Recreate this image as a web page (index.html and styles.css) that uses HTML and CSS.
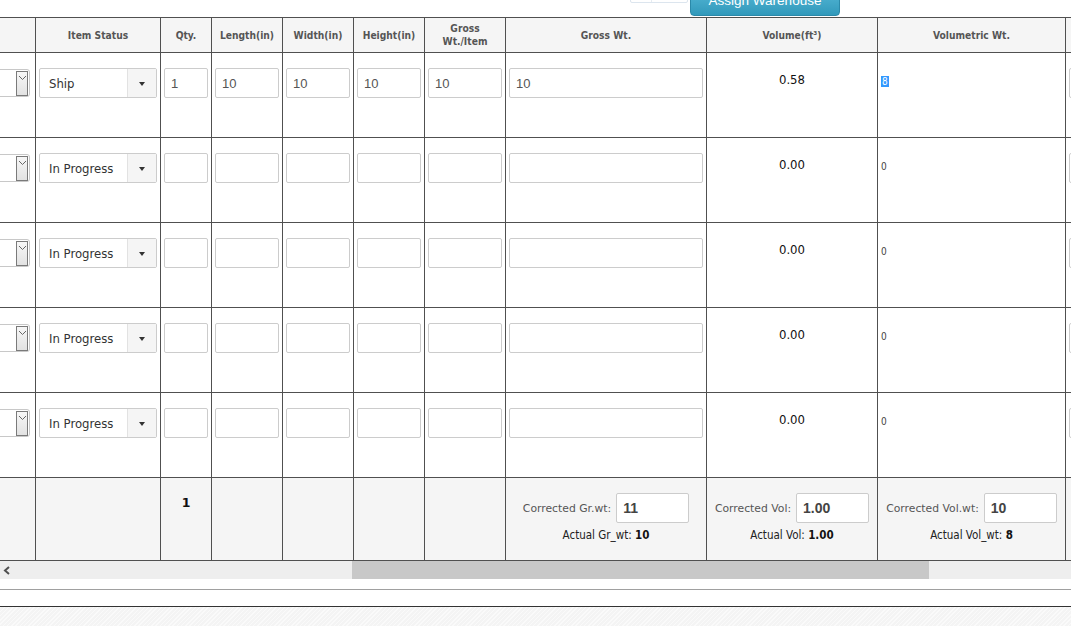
FILE: index.html
```html
<!DOCTYPE html>
<html>
<head>
<meta charset="utf-8">
<title>Items</title>
<link rel="stylesheet" href="styles.css">
</head>
<body>
<div class="page">
  <div class="toolbar">
    <div class="stub"><span class="stub-sep"></span></div>
    <button class="btn-assign">Assign Warehouse</button>
  </div>

  <div class="grid-wrap">
    <div class="row head">
      <div class="cell"></div>
      <div class="cell">Item Status</div>
      <div class="cell">Qty.</div>
      <div class="cell">Length(in)</div>
      <div class="cell">Width(in)</div>
      <div class="cell">Height(in)</div>
      <div class="cell">Gross<br>Wt./Item</div>
      <div class="cell">Gross Wt.</div>
      <div class="cell">Volume(ft³)</div>
      <div class="cell">Volumetric Wt.</div>
      <div class="cell"></div>
    </div>

    <div class="row body">
      <div class="cell cut"><div class="native-sel"><span class="native-btn"><svg width="9" height="6" viewBox="0 0 9 6"><path d="M1 1 L4.5 4.5 L8 1" fill="none" stroke="#666" stroke-width="1"/></svg></span></div></div>
      <div class="cell"><div class="select"><span class="sel-text">Ship</span><span class="sel-arrow"><i class="tri"></i></span></div></div>
      <div class="cell"><div class="inp">1</div></div>
      <div class="cell"><div class="inp">10</div></div>
      <div class="cell"><div class="inp">10</div></div>
      <div class="cell"><div class="inp">10</div></div>
      <div class="cell"><div class="inp">10</div></div>
      <div class="cell"><div class="inp">10</div></div>
      <div class="cell vol">0.58</div>
      <div class="cell volwt"><span class="sel-hl">8</span></div>
      <div class="cell"><div class="inp"></div></div>
    </div>

    <div class="row body">
      <div class="cell cut"><div class="native-sel"><span class="native-btn"><svg width="9" height="6" viewBox="0 0 9 6"><path d="M1 1 L4.5 4.5 L8 1" fill="none" stroke="#666" stroke-width="1"/></svg></span></div></div>
      <div class="cell"><div class="select"><span class="sel-text">In Progress</span><span class="sel-arrow"><i class="tri"></i></span></div></div>
      <div class="cell"><div class="inp"></div></div>
      <div class="cell"><div class="inp"></div></div>
      <div class="cell"><div class="inp"></div></div>
      <div class="cell"><div class="inp"></div></div>
      <div class="cell"><div class="inp"></div></div>
      <div class="cell"><div class="inp"></div></div>
      <div class="cell vol">0.00</div>
      <div class="cell volwt">0</div>
      <div class="cell"><div class="inp"></div></div>
    </div>

    <div class="row body">
      <div class="cell cut"><div class="native-sel"><span class="native-btn"><svg width="9" height="6" viewBox="0 0 9 6"><path d="M1 1 L4.5 4.5 L8 1" fill="none" stroke="#666" stroke-width="1"/></svg></span></div></div>
      <div class="cell"><div class="select"><span class="sel-text">In Progress</span><span class="sel-arrow"><i class="tri"></i></span></div></div>
      <div class="cell"><div class="inp"></div></div>
      <div class="cell"><div class="inp"></div></div>
      <div class="cell"><div class="inp"></div></div>
      <div class="cell"><div class="inp"></div></div>
      <div class="cell"><div class="inp"></div></div>
      <div class="cell"><div class="inp"></div></div>
      <div class="cell vol">0.00</div>
      <div class="cell volwt">0</div>
      <div class="cell"><div class="inp"></div></div>
    </div>

    <div class="row body">
      <div class="cell cut"><div class="native-sel"><span class="native-btn"><svg width="9" height="6" viewBox="0 0 9 6"><path d="M1 1 L4.5 4.5 L8 1" fill="none" stroke="#666" stroke-width="1"/></svg></span></div></div>
      <div class="cell"><div class="select"><span class="sel-text">In Progress</span><span class="sel-arrow"><i class="tri"></i></span></div></div>
      <div class="cell"><div class="inp"></div></div>
      <div class="cell"><div class="inp"></div></div>
      <div class="cell"><div class="inp"></div></div>
      <div class="cell"><div class="inp"></div></div>
      <div class="cell"><div class="inp"></div></div>
      <div class="cell"><div class="inp"></div></div>
      <div class="cell vol">0.00</div>
      <div class="cell volwt">0</div>
      <div class="cell"><div class="inp"></div></div>
    </div>

    <div class="row body">
      <div class="cell cut"><div class="native-sel"><span class="native-btn"><svg width="9" height="6" viewBox="0 0 9 6"><path d="M1 1 L4.5 4.5 L8 1" fill="none" stroke="#666" stroke-width="1"/></svg></span></div></div>
      <div class="cell"><div class="select"><span class="sel-text">In Progress</span><span class="sel-arrow"><i class="tri"></i></span></div></div>
      <div class="cell"><div class="inp"></div></div>
      <div class="cell"><div class="inp"></div></div>
      <div class="cell"><div class="inp"></div></div>
      <div class="cell"><div class="inp"></div></div>
      <div class="cell"><div class="inp"></div></div>
      <div class="cell"><div class="inp"></div></div>
      <div class="cell vol">0.00</div>
      <div class="cell volwt">0</div>
      <div class="cell"><div class="inp"></div></div>
    </div>

    <div class="row foot">
      <div class="cell"></div>
      <div class="cell"></div>
      <div class="cell qty-total">1</div>
      <div class="cell"></div>
      <div class="cell"></div>
      <div class="cell"></div>
      <div class="cell"></div>
      <div class="cell corr">
        <div class="corr-line"><span class="corr-label">Corrected Gr.wt:</span><div class="inp strong">11</div></div>
        <div class="actual">Actual Gr_wt: <b>10</b></div>
      </div>
      <div class="cell corr">
        <div class="corr-line"><span class="corr-label">Corrected Vol:</span><div class="inp strong">1.00</div></div>
        <div class="actual">Actual Vol: <b>1.00</b></div>
      </div>
      <div class="cell corr">
        <div class="corr-line"><span class="corr-label">Corrected Vol.wt:</span><div class="inp strong">10</div></div>
        <div class="actual">Actual Vol_wt: <b>8</b></div>
      </div>
      <div class="cell"></div>
    </div>
  </div>

  <div class="hscroll">
    <span class="hs-arrow"><svg width="8" height="9" viewBox="0 0 8 9"><path d="M6 1 L2 4.5 L6 8" fill="none" stroke="#505050" stroke-width="2"/></svg></span>
    <span class="hs-thumb" style="margin-left:334px;width:577px"></span>
  </div>

  <div class="gap-a"></div>
  <div class="rule-light"></div>
  <div class="gap-b"></div>
  <div class="rule-dark"></div>
  <div class="texture"></div>
</div>
</body>
</html>
```

FILE: styles.css
```css
* { box-sizing: border-box; }

html, body {
  margin: 0;
  padding: 0;
  background: #fff;
}

body {
  font-family: "DejaVu Sans Condensed", "DejaVu Sans", sans-serif;
  color: #333;
  overflow: hidden;
}

.page {
  width: 1071px;
  height: 626px;
  display: flex;
  flex-direction: column;
  overflow: hidden;
}

/* ---------- top toolbar ---------- */
.toolbar {
  height: 17px;
  flex: none;
  display: flex;
  align-items: flex-end;
  padding-left: 630px;
  overflow: hidden;
}

.stub {
  width: 58px;
  height: 20px;
  margin-bottom: 14px;
  border: 1px solid #dce5ee;
  border-radius: 0 0 2px 2px;
  display: flex;
}

.stub-sep {
  width: 21px;
  border-right: 1px solid #e6ecf2;
}

.btn-assign {
  width: 150px;
  height: 32px;
  margin: 0 0 1px 2px;
  padding: 0 0 5px;
  display: flex;
  align-items: flex-end;
  justify-content: center;
  border: 1px solid #2b89a9;
  border-radius: 0 0 4px 4px;
  background: linear-gradient(#5cbddb, #3199bb);
  color: #fff;
  font: 13.5px/18px "Liberation Sans", Arial, sans-serif;
}

/* ---------- grid table ---------- */
.grid-wrap {
  flex: none;
  border-top: 1px solid #505050;
  overflow: hidden;
}

.row {
  display: grid;
  grid-template-columns: 36px 125px 51px 71px 71px 71px 81px 201px 171px 188px 120px;
  width: 1186px;
}

.cell {
  border-right: 1px solid #505050;
  border-bottom: 1px solid #505050;
  overflow: hidden;
  min-width: 0;
}

.head .cell {
  height: 35px;
  background: #f5f5f5;
  display: flex;
  align-items: center;
  justify-content: center;
  text-align: center;
  font-weight: bold;
  font-size: 10.2px;
  line-height: 13px;
  color: #555;
}

.body .cell {
  height: 85px;
  padding: 15px 3px 0;
}

.inp {
  height: 30px;
  border: 1px solid #cccccc;
  border-radius: 2px;
  background: #fff;
  padding: 0 6px;
  font: 13px/29px "Liberation Sans", Arial, sans-serif;
  color: #555;
  white-space: nowrap;
}

.inp.strong {
  width: 73px;
  flex: none;
  font-size: 14px;
  font-weight: bold;
  color: #444;
}

/* custom select */
.select {
  height: 30px;
  border: 1px solid #cccccc;
  border-radius: 2px;
  display: flex;
  align-items: stretch;
  background: #fff;
}

.sel-text {
  flex: 1;
  padding-left: 9px;
  font-size: 13px;
  line-height: 29px;
  color: #333;
  white-space: nowrap;
}

.sel-arrow {
  width: 29px;
  flex: none;
  background: #f5f5f5;
  border-left: 1px solid #e2e2e2;
  display: flex;
  align-items: center;
  justify-content: center;
}

.tri {
  width: 0;
  height: 0;
  border-left: 3.5px solid transparent;
  border-right: 3.5px solid transparent;
  border-top: 4px solid #333;
  margin-top: 2px;
}

/* partially scrolled native select */
.body .cell.cut {
  padding: 16px 0 0;
}

.native-sel {
  width: 70px;
  height: 28px;
  margin-left: -40px;
  border: 1px solid #c8c8c8;
  border-radius: 3px;
  background: #fff;
  display: flex;
  justify-content: flex-end;
  padding: 1px 1px 1px 0;
}

.native-btn {
  width: 12px;
  height: 25px;
  border: 1px solid #7a7a7a;
  background: linear-gradient(#f7f7f7, #e2e2e2);
  display: flex;
  justify-content: center;
  padding-top: 3px;
}

.body .cell.vol {
  text-align: center;
  font-size: 13px;
  line-height: 16px;
  padding-top: 19px;
  color: #111;
}

.body .cell.volwt {
  font-size: 10px;
  line-height: 12px;
  padding-top: 23px;
  color: #444;
}

.sel-hl {
  background: #3399ff;
  color: #fff;
  padding: 0 1px;
}

/* footer */
.foot .cell {
  height: 83px;
  background: #f5f5f5;
}

.foot .cell.qty-total {
  text-align: center;
  font-family: "DejaVu Sans", sans-serif;
  font-weight: bold;
  font-size: 12.5px;
  line-height: 14px;
  padding-top: 18px;
  color: #111;
}

.foot .cell.corr {
  padding-top: 15px;
  display: flex;
  flex-direction: column;
  align-items: center;
}

.corr-line {
  display: flex;
  align-items: center;
  gap: 5px;
}

.corr-label {
  font-family: "DejaVu Sans", sans-serif;
  font-size: 10.8px;
  color: #555;
  white-space: nowrap;
}

.actual {
  margin-top: 6px;
  font-size: 11.5px;
  line-height: 13px;
  color: #222;
  white-space: nowrap;
}

.actual b {
  color: #111;
}

/* horizontal scrollbar */
.hscroll {
  height: 18px;
  flex: none;
  background: #eeeeee;
  display: flex;
  align-items: stretch;
}

.hs-arrow {
  width: 18px;
  flex: none;
  display: flex;
  align-items: center;
  justify-content: center;
  padding-right: 4px;
}

.hs-thumb {
  flex: none;
  background: #c8c8c8;
}

.gap-a { height: 10px; flex: none; }
.rule-light { height: 1px; flex: none; background: #a0a0a0; }
.gap-b { height: 16px; flex: none; }
.rule-dark { height: 1px; flex: none; background: #333; }

.texture {
  flex: 1;
  background-color: #f4f4f4;
  background-image: repeating-linear-gradient(135deg, rgba(255,255,255,0.55) 0 1px, rgba(0,0,0,0) 1px 3px);
}
```
